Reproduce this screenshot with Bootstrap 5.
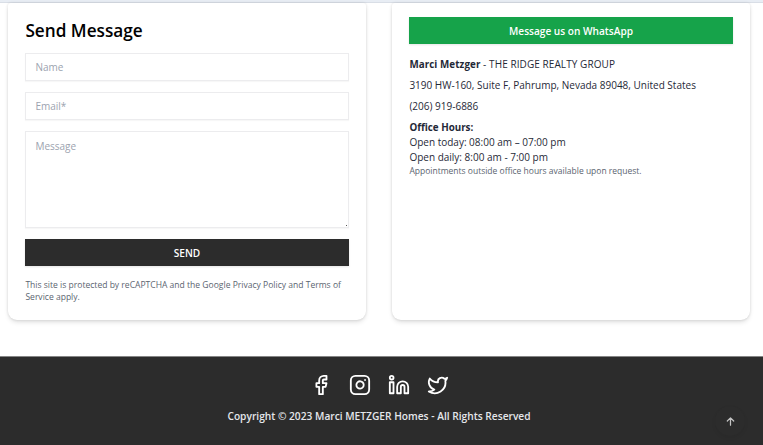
<!DOCTYPE html>
<html lang="en">
<head>
<meta charset="utf-8">
<meta name="viewport" content="width=device-width, initial-scale=1">
<title>Contact - Marci METZGER Homes</title>
<link href="https://cdn.jsdelivr.net/npm/bootstrap@5.3.0/dist/css/bootstrap.min.css" rel="stylesheet">
<style>
html,body{height:445px;overflow:hidden}
body{font-family:"Open Sans","Noto Sans",sans-serif;font-size:10px;line-height:15px;color:#1f2937;background:#fff}
.top-strip{height:3px;background:#e8edf4;border-bottom:1px solid #d9dee6}
.contact-area{height:353px;padding:0 13px 36px 8px;gap:26px}
.panel{flex:1 1 0;border:0;border-radius:3px 3px 9px 9px;background:#fff;box-shadow:0 3px 5px -1px rgba(0,0,0,.13),0 0 3px rgba(0,0,0,.12);padding:0 17.400px 0 17.400px}
.panel-title{font-size:17.2px;line-height:24px;font-weight:600;color:#000;margin:16px 0 10px}
.field{height:28px;border:1px solid #ececee;border-radius:0;padding:0 9px;font-size:10px;line-height:15px;box-shadow:0 1px 1px rgba(0,0,0,.03);margin-bottom:11px}
.field::placeholder{color:#9ca3af;opacity:1}
textarea.field{height:97px;padding-top:7px;resize:none}
.grip{right:2px;bottom:13px;width:1px;height:1px;background:#555}
.bar-btn{height:27px;padding:1px 0 0;border:0;border-radius:0;font-size:10.1px;font-weight:600;line-height:27px;color:#fff;box-shadow:0 1px 2px rgba(0,0,0,.1)}
.send{background:#2c2c2c}
.whats{background:#16a34a;margin-top:14px}
.fine{font-size:8.5px;line-height:12px;color:#5b6470}
.legal{font-size:8.56px;padding-top:13px}
.info{margin-top:13px}
.info p{line-height:15px;margin-bottom:6px}
.info strong{font-size:9.8px}
.realty{letter-spacing:.08px}
.site-foot{height:89px;background:#2c2c2c;border-top:1px solid #858585;color:#e5e7eb;padding-top:17px}
.site-foot svg{width:22px;height:22px;fill:none;stroke:#fff;stroke-width:2;stroke-linecap:round;stroke-linejoin:round}
.socials{gap:17px;margin-left:-5px}
.copy{margin:13px 5px 0 0;font-size:10.2px;font-weight:600;line-height:15px}
.to-top{right:18px;bottom:9px;width:30px;height:30px;background:#2c2c2c;box-shadow:0 2px 4px rgba(0,0,0,.06)}
.site-foot .to-top svg{width:11px;height:11px;stroke:#c4c4c4;stroke-width:2.7}
</style>
<script src="https://cdn.jsdelivr.net/npm/bootstrap@5.3.0/dist/js/bootstrap.bundle.min.js"></script>
</head>
<body>
<div class="top-strip"></div>
<main class="contact-area d-flex">
  <form class="panel card">
    <h2 class="panel-title">Send Message</h2>
    <input class="field form-control" placeholder="Name" aria-label="Name">
    <input class="field form-control" placeholder="Email*" aria-label="Email">
    <div class="position-relative"><textarea class="field form-control d-block" placeholder="Message" aria-label="Message"></textarea><span class="grip position-absolute"></span></div>
    <button type="button" class="btn bar-btn send w-100">SEND</button>
    <p class="fine legal mb-0">This site is protected by reCAPTCHA and the Google Privacy Policy and Terms of<br>Service apply.</p>
  </form>
  <section class="panel card">
    <a class="btn bar-btn whats w-100" href="#">Message us on WhatsApp</a>
    <div class="info">
      <p class="realty"><strong>Marci Metzger</strong> - THE RIDGE REALTY GROUP</p>
      <p>3190 HW-160, Suite F, Pahrump, Nevada 89048, United States</p>
      <p>(206) 919-6886</p>
      <div><strong>Office Hours:</strong></div>
      <div>Open today: 08:00 am – 07:00 pm</div>
      <div>Open daily: 8:00 am - 7:00 pm</div>
      <div class="fine">Appointments outside office hours available upon request.</div>
    </div>
  </section>
</main>
<footer class="site-foot position-relative text-center">
  <div class="socials d-flex justify-content-center">
    <svg viewBox="0 0 24 24"><path d="M18 2h-3a5 5 0 0 0-5 5v3H7v4h3v8h4v-8h3l1-4h-4V7a1 1 0 0 1 1-1h3z"/></svg>
    <svg viewBox="0 0 24 24"><rect x="2" y="2" width="20" height="20" rx="5"/><path d="M16 11.37A4 4 0 1 1 12.63 8 4 4 0 0 1 16 11.37zM17.5 6.5h.01"/></svg>
    <svg viewBox="0 0 24 24"><path d="M16 8a6 6 0 0 1 6 6v7h-4v-7a2 2 0 0 0-4 0v7h-4v-7a6 6 0 0 1 6-6zM2 9h4v12H2z"/><circle cx="4" cy="4" r="2"/></svg>
    <svg viewBox="0 0 24 24"><path d="M22 4s-.7 2.1-2 3.4c1.6 10-9.4 17.3-18 11.6 2.2.1 4.4-.6 6-2C3 15.5.5 9.6 3 5c2.200 2.600 5.600 4.100 9 4-.9-4.200 4-6.600 7-3.800 1.100 0 3-1.200 3-1.200z"/></svg>
  </div>
  <p class="copy">Copyright © 2023 Marci METZGER Homes - All Rights Reserved</p>
  <a class="to-top position-absolute rounded-circle d-flex align-items-center justify-content-center" href="#" aria-label="Back to top"><svg viewBox="0 0 24 24"><path d="M12 20V4M5 11l7-7 7 7"/></svg></a>
</footer>
</body>
</html>
